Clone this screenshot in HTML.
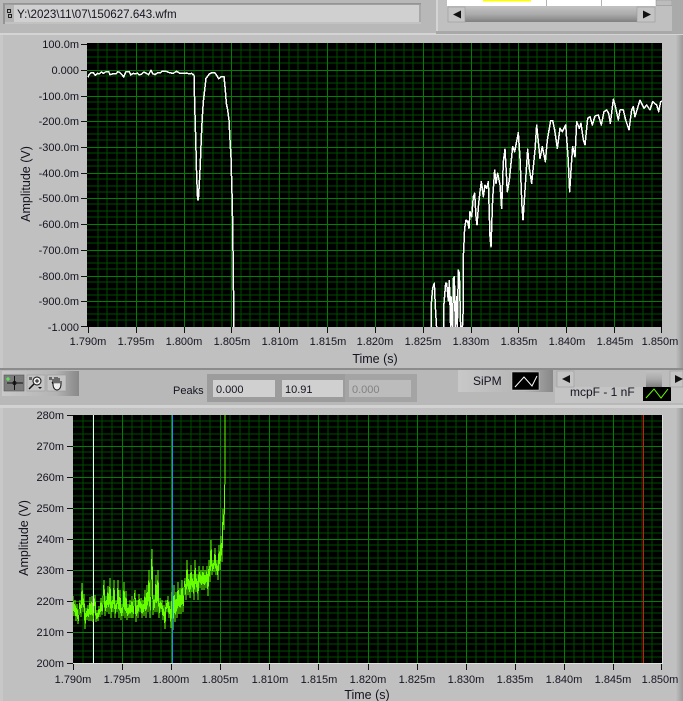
<!DOCTYPE html>
<html lang="en"><head><meta charset="utf-8"><title>Waveform viewer</title>
<style>
html,body{margin:0;padding:0;width:683px;height:701px;overflow:hidden;background:#c0c0c0}
svg{display:block}
text{font-family:"Liberation Sans",sans-serif;font-size:11px;fill:#141420}
.r{text-anchor:end}.m{text-anchor:middle}.n{font-size:12.500px}
</style></head><body>
<svg width="683" height="701" viewBox="0 0 683 701" xmlns="http://www.w3.org/2000/svg">
<defs>
<linearGradient id="gs" x1="0" y1="0" x2="1" y2="0"><stop offset="0" stop-color="#c8c8c8"/><stop offset=".7" stop-color="#b4b4b4"/><stop offset="1" stop-color="#888"/></linearGradient>
<linearGradient id="gv" x1="0" y1="0" x2="0" y2="1"><stop offset="0" stop-color="#c0c0c0"/><stop offset=".5" stop-color="#aaa"/><stop offset="1" stop-color="#808080"/></linearGradient>
<linearGradient id="gr" x1="0" y1="0" x2="1" y2="0"><stop offset="0" stop-color="#c4c4c4"/><stop offset="1" stop-color="#9a9a9a"/></linearGradient>
<g id="v1"><path d="M10 0V284M19 0V284M29 0V284M38 0V284"/></g>
<g id="h1"><path d="M0 6H575M0 13H575M0 19H575"/></g>
<g id="v2"><path d="M10 0V248M20 0V248M29 0V248M39 0V248"/></g>
<g id="h2"><path d="M0 6H589M0 12H589M0 19H589M0 25H589"/></g>
<clipPath id="c1"><rect x="87" y="43" width="575" height="284"/></clipPath>
<clipPath id="c2"><rect x="73" y="415" width="589" height="248"/></clipPath>
</defs>

<!-- backgrounds -->
<rect width="683" height="701" fill="#c0c0c0"/>
<rect width="683" height="33" fill="#b8b8b8"/>
<rect x="0" y="33" width="683" height="2" fill="#d4d4d4"/>
<rect x="0" y="35" width="3" height="333" fill="#c8c8c8"/>
<rect x="0" y="408" width="3" height="293" fill="#c8c8c8"/>
<rect x="675" y="35" width="8" height="333" fill="url(#gr)"/>
<rect x="675" y="408" width="8" height="293" fill="url(#gr)"/>
<rect x="0" y="368" width="683" height="2" fill="#8c8c8c"/>
<rect x="0" y="370" width="683" height="35" fill="#b8b8b8"/>
<rect x="0" y="405" width="683" height="3" fill="#d2d2d2"/>

<!-- file path -->
<rect x="3" y="3" width="418" height="21" fill="#a8a8a8"/>
<rect x="3" y="3" width="418" height="1.500" fill="#949494"/>
<rect x="3" y="3" width="2" height="21" fill="#949494"/>
<rect x="5" y="5" width="9" height="17" fill="#b4b4b4"/>
<rect x="14" y="5" width="405" height="17" fill="#d0d0d0"/>
<rect x="5" y="22" width="416" height="2" fill="#c2c2c2"/>
<path d="M7.500 9.500h3v3h-3zM8.500 14.500h3v3h-3z" fill="none" stroke="#222" stroke-width="1"/>
<text x="17" y="18" style="font-size:11.600px">Y:\2023\11\07\150627.643.wfm</text>

<!-- top right panel -->
<rect x="436" y="0" width="247" height="33" fill="#c0c0c0"/>
<rect x="436" y="0" width="2" height="33" fill="#d4d4d4"/>
<rect x="436" y="31" width="247" height="3" fill="#a8a8a8"/>
<rect x="447" y="0" width="209" height="6" fill="#fff"/>
<rect x="483" y="0" width="48" height="1.500" fill="#ffff00"/>
<rect x="546" y="0" width="1" height="6" fill="#b4b4b4"/>
<rect x="601" y="0" width="1" height="6" fill="#b4b4b4"/>
<rect x="656" y="0" width="16" height="5.500" fill="#bcbcbc" stroke="#8a8a8a" stroke-width=".5"/>
<rect x="672" y="0" width="11" height="33" fill="#aaa"/>
<rect x="448" y="7" width="207" height="15" fill="url(#gv)"/>
<rect x="448" y="7" width="17" height="15" fill="#c4c4c4" stroke="#999" stroke-width=".6"/>
<rect x="637" y="7" width="18" height="15" fill="#c4c4c4" stroke="#999" stroke-width=".6"/>
<path d="M453 14.500l8-4v8z" fill="#111"/>
<path d="M651 14.500l-8-4v8z" fill="#111"/>

<!-- plot 1 -->
<rect x="87" y="43" width="575" height="284" fill="#000"/>
<g stroke="#004c00" stroke-width="1" fill="none" shape-rendering="crispEdges">
<use href="#v1" x="88" y="43"/><use href="#v1" x="136" y="43"/><use href="#v1" x="184" y="43"/><use href="#v1" x="231" y="43"/><use href="#v1" x="279" y="43"/><use href="#v1" x="327" y="43"/><use href="#v1" x="375" y="43"/><use href="#v1" x="423" y="43"/><use href="#v1" x="471" y="43"/><use href="#v1" x="518" y="43"/><use href="#v1" x="566" y="43"/><use href="#v1" x="614" y="43"/>
<use href="#h1" x="87" y="44"/><use href="#h1" x="87" y="70"/><use href="#h1" x="87" y="96"/><use href="#h1" x="87" y="121"/><use href="#h1" x="87" y="147"/><use href="#h1" x="87" y="173"/><use href="#h1" x="87" y="198"/><use href="#h1" x="87" y="224"/><use href="#h1" x="87" y="250"/><use href="#h1" x="87" y="276"/><use href="#h1" x="87" y="301"/>
</g>
<path stroke="#008000" stroke-width="1" fill="none" shape-rendering="crispEdges" d="M136.500 43V327M184.500 43V327M231.500 43V327M279.500 43V327M327.500 43V327M375.500 43V327M423.500 43V327M471.500 43V327M518.500 43V327M566.500 43V327M614.500 43V327M87 70.500H662M87 96.500H662M87 121.500H662M87 147.500H662M87 173.500H662M87 198.500H662M87 224.500H662M87 250.500H662M87 276.500H662M87 301.500H662"/>
<g clip-path="url(#c1)" fill="none" stroke="#fff" stroke-linejoin="round" shape-rendering="crispEdges">
<g transform="translate(80 50) scale(.33333)" stroke-width="4.500">
<polyline points="24,82 27,74 33,68 40,68 46,76 52,70 58,72 64,66 70,70 76,66 86,65 90,74 97,72 108,72 113,65 120,68 125,73 131,81 137,66 148,65 152,75 160,70 167,72 172,69 178,75 185,72 192,66 199,70 206,74 213,60 218,71 225,74 233,68 241,68 248,63 258,64 268,68 279,70 290,64 300,70 310,70 320,69 328,72 335,70 342,76 344,160 347,262 350,380 353,450 355,450 358,400 361,340 364,260 367,200 370,155 374,120 378,85 388,72 396,68 404,68 410,76 416,86 424,80 432,80 436,120 439,160 443,180 447,210 450,270 453,322 456,430 458,520 462,840"/>
</g>
<g transform="translate(420 90) scale(.33333)" stroke-width="4.500">
<polyline points="34,716 34,640 38,595 43,580 46,650 50,716"/>
<polyline points="72,716 72,640 77,580 80,580 85,632 88,572 92,716 93,620 98,716 100,565 103,560 106,716 110,620 112,716 115,540 118,550 122,716"/>
<polyline points="127,716 129,680 130,500 134,415 138,390 143,395 147,415 150,365 155,380 160,320 164,310 168,380 171,405 176,340 180,305 184,275 190,320 195,285 200,295 205,275 210,440 213,470 218,325 224,240 228,280 233,250 240,285 245,355 250,215 255,178 262,305 268,270 278,170 284,185 295,128 300,205 306,350 309,390 315,300 323,178 328,235 335,280 345,180 350,105 360,205 367,170 376,215 382,150 392,92 398,92 404,120 412,175 420,115 427,125 437,105 444,200 449,305 455,210 458,170 465,200 470,95 478,115 483,100 490,150 495,165 503,85 510,80 517,105 525,78 535,75 544,105 552,65 560,60 566,70 571,100 580,28 585,45 595,90 600,60 610,60 617,90 627,120 635,60 640,50 645,80 660,30 672,55 680,45 690,60 698,35 710,45 716,65 722,35 730,32"/>
</g>
</g>
<!-- plot1 ticks -->
<path stroke="#111" stroke-width="1" shape-rendering="crispEdges" d="M81 44.500h6M81 70.500h6M81 96.500h6M81 121.500h6M81 147.500h6M81 173.500h6M81 198.500h6M81 224.500h6M81 250.500h6M81 276.500h6M81 301.500h6M81 326.500h6M88.500 327v6M136.500 327v6M184.500 327v6M231.500 327v6M279.500 327v6M327.500 327v6M375.500 327v6M423.500 327v6M471.500 327v6M518.500 327v6M566.500 327v6M614.500 327v6M661.500 327v6"/>
<text class="r" x="79" y="48">100.0m</text>
<text class="r" x="79" y="74">0.000</text>
<text class="r" x="79" y="100">-100.0m</text>
<text class="r" x="79" y="125">-200.0m</text>
<text class="r" x="79" y="151">-300.0m</text>
<text class="r" x="79" y="177">-400.0m</text>
<text class="r" x="79" y="202">-500.0m</text>
<text class="r" x="79" y="228">-600.0m</text>
<text class="r" x="79" y="254">-700.0m</text>
<text class="r" x="79" y="280">-800.0m</text>
<text class="r" x="79" y="305">-900.0m</text>
<text class="r" x="79" y="331">-1.000</text>
<text class="m" x="88" y="345">1.790m</text><text class="m" x="136" y="345">1.795m</text><text class="m" x="184" y="345">1.800m</text><text class="m" x="232" y="345">1.805m</text><text class="m" x="280" y="345">1.810m</text><text class="m" x="328" y="345">1.815m</text><text class="m" x="375" y="345">1.820m</text><text class="m" x="423" y="345">1.825m</text><text class="m" x="471" y="345">1.830m</text><text class="m" x="519" y="345">1.835m</text><text class="m" x="567" y="345">1.840m</text><text class="m" x="615" y="345">1.845m</text><text class="m" x="660" y="345">1.850m</text>
<text class="m n" x="375" y="363">Time (s)</text>
<text class="m n" transform="translate(30 184) rotate(-90)">Amplitude (V)</text>

<!-- toolbar -->
<rect x="2" y="371" width="77" height="25" fill="url(#gs)"/>
<rect x="4" y="375" width="20" height="16" fill="#7c7c7c" stroke="#555" stroke-width=".6"/>
<rect x="27" y="375" width="18" height="16" fill="#c4c4c4" stroke="#999" stroke-width=".6"/>
<rect x="47" y="375" width="19" height="16" fill="#c4c4c4" stroke="#999" stroke-width=".6"/>
<path d="M7 383h16M14.500 376v14" stroke="#111" fill="none"/><circle cx="14.500" cy="383" r="1.500" fill="none" stroke="#111"/>
<path d="M6 379h4M8 377v4" stroke="#5f5" fill="none"/>
<circle cx="37" cy="381" r="4" fill="#eee" stroke="#111"/><path d="M35 381h4M37 379v4" stroke="#111"/><path d="M34 384l-5 5" stroke="#111" stroke-width="1.500"/><path d="M38 387h4l-2 2z" fill="#111"/>
<rect x="29" y="377" width="3" height="3" fill="#666"/><rect x="49" y="377" width="3" height="3" fill="#666"/>
<path d="M53 384v-5M55 383v-6M57 383v-6M59 383v-5M61 384v-3M53 384l-1-2M53 384c0 4 2 6 4 6s4-2 4-6" fill="#eee" stroke="#111" stroke-width="1"/>

<!-- peaks -->
<text x="173" y="394">Peaks</text>
<rect x="207" y="374" width="71" height="28" fill="#9c9c9c"/>
<rect x="213" y="380" width="62" height="17" fill="#d0d0d0"/>
<text x="216" y="393">0.000</text>
<rect x="278" y="374" width="67" height="28" fill="#9c9c9c"/>
<rect x="282" y="380" width="61" height="17" fill="#d0d0d0"/>
<text x="285" y="393">10.91</text>
<rect x="345" y="374" width="72" height="28" fill="#a4a4a4"/>
<rect x="349" y="380" width="62" height="17" fill="#bcbcbc"/>
<text x="352" y="393" style="fill:#828282">0.000</text>

<!-- legend -->
<rect x="458" y="370" width="95" height="22" fill="url(#gs)"/>
<text x="473" y="385" style="font-size:12px">SiPM</text>
<rect x="512" y="372" width="27" height="18" fill="#000" stroke="#ddd" stroke-width=".5"/>
<polyline points="515,387 524,377 532,386 537,376" fill="none" stroke="#fff"/>
<rect x="555" y="387" width="128" height="16" fill="#c4c4c4"/>
<text x="570" y="396" style="font-size:12px">mcpF - 1 nF</text>
<rect x="643" y="387" width="28" height="14" fill="#000"/>
<polyline points="646,398 654,389 661,398 668,389" fill="none" stroke="#6f0"/>
<rect x="557" y="370" width="126" height="17" fill="#bcbcbc"/>
<rect x="557" y="371" width="17" height="16" fill="#c4c4c4" stroke="#999" stroke-width=".6"/>
<path d="M562 379l8-4v8z" fill="#111"/>
<rect x="646" y="371" width="16" height="16" fill="url(#gv)"/>
<rect x="670" y="371" width="13" height="16" fill="#c4c4c4" stroke="#999" stroke-width=".6"/>
<path d="M683 379l-8-4v8z" fill="#111"/>

<!-- plot 2 -->
<rect x="73" y="415" width="589" height="248" fill="#000"/>
<g stroke="#004c00" stroke-width="1" fill="none" shape-rendering="crispEdges">
<use href="#v2" x="73" y="415"/><use href="#v2" x="122" y="415"/><use href="#v2" x="171" y="415"/><use href="#v2" x="220" y="415"/><use href="#v2" x="269" y="415"/><use href="#v2" x="318" y="415"/><use href="#v2" x="368" y="415"/><use href="#v2" x="417" y="415"/><use href="#v2" x="466" y="415"/><use href="#v2" x="515" y="415"/><use href="#v2" x="564" y="415"/><use href="#v2" x="613" y="415"/>
<use href="#h2" x="73" y="415"/><use href="#h2" x="73" y="446"/><use href="#h2" x="73" y="477"/><use href="#h2" x="73" y="508"/><use href="#h2" x="73" y="539"/><use href="#h2" x="73" y="570"/><use href="#h2" x="73" y="601"/><use href="#h2" x="73" y="632"/>
</g>
<path stroke="#008000" stroke-width="1" fill="none" shape-rendering="crispEdges" d="M122.500 415V663M171.500 415V663M220.500 415V663M269.500 415V663M318.500 415V663M368.500 415V663M417.500 415V663M466.500 415V663M515.500 415V663M564.500 415V663M613.500 415V663M73 446.500H662M73 477.500H662M73 508.500H662M73 539.500H662M73 570.500H662M73 601.500H662M73 632.500H662"/>
<path d="M662.500 415V664M73 663.500H663" stroke="#e0e0e0" fill="none" shape-rendering="crispEdges"/>
<g clip-path="url(#c2)">
<path d="M93.500 415V663" stroke="#f0f8ff" fill="none" shape-rendering="crispEdges"/>
<path d="M643.500 415V663" stroke="#e01010" fill="none" shape-rendering="crispEdges"/>
<polyline fill="none" stroke="#66ff00" stroke-width="1" shape-rendering="crispEdges" points="73,596 74,616 75,600 76,621 77,604 78,624 79,612 80,600 81,617 82,583 83,612 84,594 85,629 86,608 87,620 88,605 89,621 90,597 91,621 92,596 93,622 94,610 95,595 96,622 97,610 98,621 99,606 100,617 101,598 102,615 103,601 104,580 105,616 106,596 107,612 108,586 109,614 110,578 111,618 112,596 113,612 114,580 115,618 116,600 117,612 118,580 119,618 120,590 121,620 122,604 123,616 124,582 125,618 126,591 127,620 128,604 129,618 130,600 131,618 132,596 133,618 134,602 135,590 136,622 137,600 138,618 139,594 140,612 141,598 142,618 143,600 144,616 145,590 146,618 147,585 148,612 149,570 150,618 151,590 152,549 153,615 154,595 155,612 156,575 157,612 158,570 159,618 160,598 161,612 162,600 163,620 164,605 165,629 166,600 167,612 168,596 169,618 170,602 171,628 172,592 173,630 174,585 175,622 176,592 177,618 178,582 179,614 180,588 181,614 182,580 183,612 184,590 185,578 186,600 187,560 188,595 189,574 190,598 191,565 192,592 193,574 194,600 195,560 196,592 197,574 198,600 199,566 200,588 201,570 202,590 203,566 204,590 205,570 206,588 207,566 208,596 209,560 210,582 211,540 212,575 213,560 214,572 215,548 216,575 217,560 218,580 219,545 220,570 221,536 222,562 223,509 224,530 225,470 225,415"/>
<path d="M172.500 415V663" stroke="#1e8cf0" stroke-width="1" fill="none" shape-rendering="crispEdges"/>
</g>
<path stroke="#111" stroke-width="1" shape-rendering="crispEdges" d="M67 415.500h6M67 446.500h6M67 477.500h6M67 508.500h6M67 539.500h6M67 570.500h6M67 601.500h6M67 632.500h6M67 663.500h6M73.500 664v6M122.500 664v6M171.500 664v6M220.500 664v6M269.500 664v6M318.500 664v6M368.500 664v6M417.500 664v6M466.500 664v6M515.500 664v6M564.500 664v6M613.500 664v6M661.500 664v6"/>
<text class="r" x="64" y="419">280m</text>
<text class="r" x="64" y="450">270m</text>
<text class="r" x="64" y="481">260m</text>
<text class="r" x="64" y="512">250m</text>
<text class="r" x="64" y="543">240m</text>
<text class="r" x="64" y="574">230m</text>
<text class="r" x="64" y="605">220m</text>
<text class="r" x="64" y="636">210m</text>
<text class="r" x="64" y="667">200m</text>
<text class="m" x="73" y="683">1.790m</text><text class="m" x="122" y="683">1.795m</text><text class="m" x="171" y="683">1.800m</text><text class="m" x="220" y="683">1.805m</text><text class="m" x="270" y="683">1.810m</text><text class="m" x="319" y="683">1.815m</text><text class="m" x="368" y="683">1.820m</text><text class="m" x="417" y="683">1.825m</text><text class="m" x="466" y="683">1.830m</text><text class="m" x="515" y="683">1.835m</text><text class="m" x="564" y="683">1.840m</text><text class="m" x="613" y="683">1.845m</text><text class="m" x="660" y="683">1.850m</text>
<text class="m n" x="367" y="699">Time (s)</text>
<text class="m n" transform="translate(28 538) rotate(-90)">Amplitude (V)</text>
</svg>
</body></html>
